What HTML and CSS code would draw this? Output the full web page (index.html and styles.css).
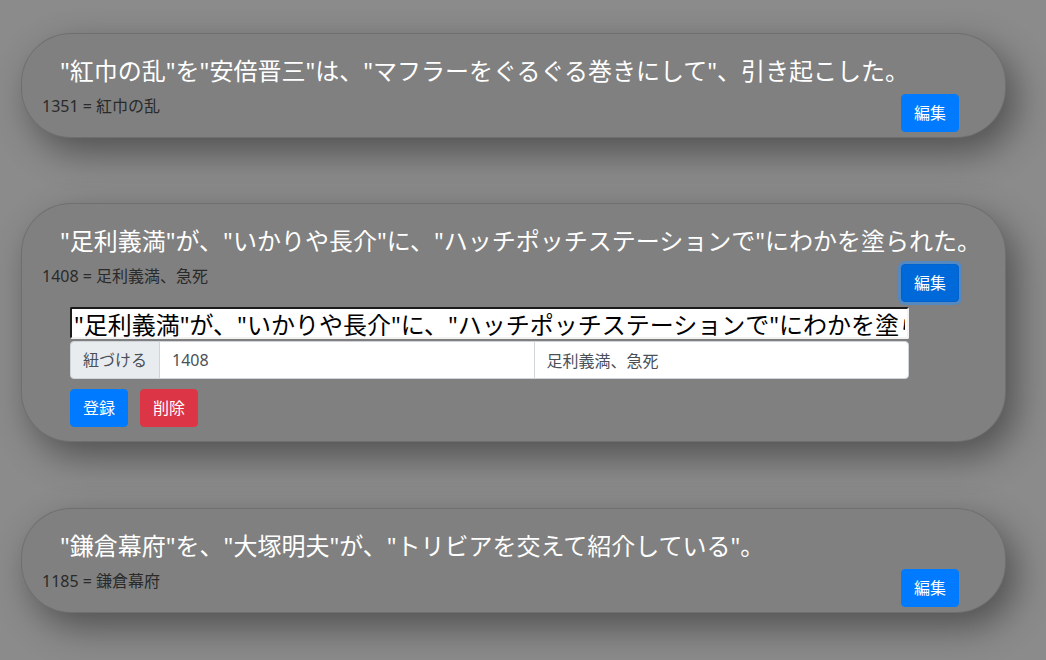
FILE: index.html
```html
<!DOCTYPE html>
<html lang="ja">
<head>
<meta charset="utf-8">
<title>Cards</title>
<link rel="stylesheet" href="styles.css">
</head>
<body>
<div class="page">
  <div class="card">
    <h4 class="title">"紅巾の乱"を"安倍晋三"は、"マフラーをぐるぐる巻きにして"、引き起こした。</h4>
    <div class="meta">
      <span class="tag">1351 = 紅巾の乱</span>
      <button class="btn btn-primary">編集</button>
    </div>
  </div>

  <div class="card">
    <h4 class="title">"足利義満"が、"いかりや長介"に、"ハッチポッチステーションで"にわかを塗られた。</h4>
    <div class="meta">
      <span class="tag">1408 = 足利義満、急死</span>
      <button class="btn btn-primary is-focus">編集</button>
    </div>
    <form class="edit-form">
      <input class="title-input" type="text" value="&quot;足利義満&quot;が、&quot;いかりや長介&quot;に、&quot;ハッチポッチステーションで&quot;にわかを塗られた。">
      <div class="input-group">
        <span class="prepend">紐づける</span>
        <input class="field" type="text" value="1408">
        <input class="field" type="text" value="足利義満、急死">
      </div>
      <div class="actions">
        <button type="button" class="btn btn-primary">登録</button>
        <button type="button" class="btn btn-danger">削除</button>
      </div>
    </form>
  </div>

  <div class="card card-last">
    <h4 class="title">"鎌倉幕府"を、"大塚明夫"が、"トリビアを交えて紹介している"。</h4>
    <div class="meta">
      <span class="tag">1185 = 鎌倉幕府</span>
      <button class="btn btn-primary">編集</button>
    </div>
  </div>
</div>
</body>
</html>
```

FILE: styles.css
```css
* {
  box-sizing: border-box;
}

html, body {
  margin: 0;
  padding: 0;
}

body {
  background: #8b8b8b;
  font-family: "Noto Sans", "Noto Sans CJK JP", sans-serif;
  color: #212529;
  font-size: 16px;
  line-height: 1.5;
  height: 660px;
  overflow: hidden;
}

.page {
  padding: 33px 40px 0 21px;
  display: flex;
  flex-direction: column;
  gap: 65px;
}

.card {
  width: 985px;
  background: #808080;
  border: 1px solid rgba(0, 0, 0, 0.13);
  border-radius: 50px;
  padding: 22px 46px 5px 20px;
  box-shadow: 10px 14px 36px rgba(0, 0, 0, 0.42);
}

.card-last {
  margin-top: 1px;
}

.title {
  margin: 0 0 9px 18px;
  font-size: 24px;
  font-weight: 400;
  line-height: 29px;
  color: #ffffff;
  white-space: nowrap;
}

.meta {
  display: flex;
  justify-content: space-between;
  align-items: flex-start;
}

.tag {
  font-size: 16px;
  line-height: 24px;
  color: #2a2a2a;
}

.btn {
  font-family: inherit;
  font-size: 16px;
  line-height: 24px;
  padding: 6px 12px;
  border: 1px solid transparent;
  border-radius: 4px;
  color: #fff;
  cursor: pointer;
}

.btn-primary {
  background: #007bff;
  border-color: #007bff;
}

.btn-primary.is-focus {
  background: #0069d9;
  border-color: #0062cc;
  box-shadow: 0 0 0 3px rgba(38, 143, 255, 0.5);
}

.btn-danger {
  background: #dc3545;
  border-color: #dc3545;
}

.edit-form {
  margin: 5px 50px 9px 28px;
  display: flex;
  flex-direction: column;
}

.title-input {
  height: 32px;
  width: 100%;
  font-family: inherit;
  font-size: 24px;
  line-height: 28px;
  padding: 0 2px;
  color: #000;
  background: #fff;
  border-style: solid;
  border-width: 2px;
  border-color: #1b1b1b #f2f2f2 #f2f2f2 #1b1b1b;
  border-radius: 2px;
  overflow: hidden;
}

.input-group {
  margin-top: 2px;
  display: flex;
  height: 38px;
}

.prepend {
  display: flex;
  align-items: center;
  padding: 6px 12px;
  background: #e9ecef;
  border: 1px solid #ced4da;
  border-radius: 4px 0 0 4px;
  color: #495057;
  font-size: 16px;
  white-space: nowrap;
}

.field {
  flex: 1;
  min-width: 0;
  font-family: inherit;
  font-size: 16px;
  padding: 6px 12px;
  color: #495057;
  background: #fff;
  border: 1px solid #ced4da;
  margin-left: -1px;
}

.field:last-child {
  border-radius: 0 4px 4px 0;
}

.actions {
  margin-top: 10px;
  display: flex;
  gap: 12px;
}
```
